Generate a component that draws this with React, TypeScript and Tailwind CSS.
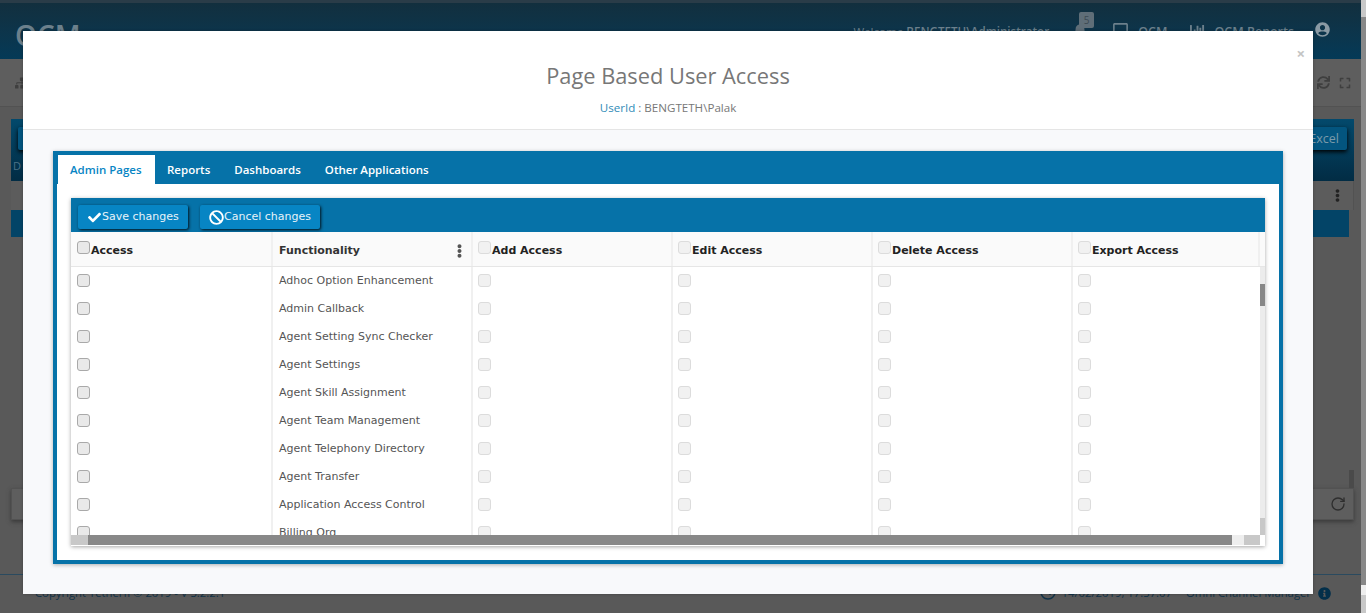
import React from 'react';
import { FaBan, FaBell, FaCheck, FaEllipsisV, FaInfoCircle, FaRegClock, FaRegSquare, FaSitemap, FaSync, FaUserCircle, FaExpand, FaChartBar } from 'react-icons/fa';
import { RotateCw } from 'lucide-react';

const pages = [
  'Adhoc Option Enhancement',
  'Admin Callback',
  'Agent Setting Sync Checker',
  'Agent Settings',
  'Agent Skill Assignment',
  'Agent Team Management',
  'Agent Telephony Directory',
  'Agent Transfer',
  'Application Access Control',
  'Billing Org',
];

const tabs = ['Reports', 'Dashboards', 'Other Applications'];

function Check({ off }: { off?: boolean }) {
  return (
    <input
      type="checkbox"
      disabled={off}
      className={
        off
          ? 'appearance-none block shrink-0 w-[13px] h-[13px] rounded-[3px] border border-[#dcdcdc] bg-[#f1f1f1]'
          : 'appearance-none block shrink-0 w-[13px] h-[13px] rounded-[3px] border border-[#a9a9a9] bg-[#e9e9e9]'
      }
    />
  );
}

function HeadCell({ label, off, width, pad }: { label: string; off?: boolean; width: string; pad: string }) {
  return (
    <div className={`${width} ${pad} h-full border-r-2 border-[#f0f0f0] pt-[9px] flex items-start`}>
      <Check off={off} />
      <span className="font-bold text-[11px] leading-[16px] text-[#222] pl-px pt-[2px]">{label}</span>
    </div>
  );
}

function Backdrop() {
  return (
    <div className="h-[613px] flex flex-col bg-[#595959] overflow-hidden font-['Open_Sans',sans-serif] pr-[5px]">
      <div className="h-[3px] bg-[#2a3c48] shrink-0 -mr-[5px]" />
      <div className="h-[56px] shrink-0 bg-gradient-to-b from-[#122f3e] to-[#043a57] flex items-start pl-[15px] pr-[31px] text-[#6c808c]">
        <span className="text-[28px] leading-none font-semibold mt-[18px]">OCM</span>
        <div className="ml-auto flex items-start text-[12.5px] pt-[20px]">
          <span className="text-[11.6px] mr-[24px] leading-[18px]">
            Welcome <span className="font-semibold">BENGTETH\Administrator</span>
          </span>
          <div className="relative">
            <FaBell className="w-[14px] h-[14px] text-[#5f6e78]" />
            <span className="absolute -top-[11px] left-[6px] w-[15px] h-[16px] rounded-[2px] bg-[#5f6e78] text-[#3c4a53] text-[10px] leading-[16px] text-center">5</span>
          </div>
          <FaRegSquare className="w-[17px] h-[17px] ml-[25px] -mt-[1px]" />
          <span className="ml-[9px] font-semibold">OCM</span>
          <FaChartBar className="w-[15px] h-[15px] ml-[23px]" />
          <span className="ml-[9px] font-semibold">OCM Reports</span>
          <FaUserCircle className="w-[15px] h-[15px] ml-[21px] -mt-px text-[#8a9aa4]" />
        </div>
      </div>
      <div className="h-[48px] shrink-0 bg-[#5e5e5e] border-b border-[#525252] flex items-center pl-[15px] pr-[10px] text-[#3f3f3f]">
        <FaSitemap className="w-[14px] h-[12px]" />
        <FaSync className="w-[13px] h-[13px] ml-auto" />
        <FaExpand className="w-[12px] h-[12px] ml-[9px]" />
      </div>
      <div className="flex-1 flex flex-col pl-[11px] pr-[7px] pt-[12px]">
        <div className="h-[62px] shrink-0 bg-gradient-to-b from-[#03496c] to-[#022c44] relative">
          <div className="absolute left-[7px] top-[8px] w-[12px] h-[23px] bg-[#03557f] rounded-[2px] shadow-[0_2px_4px_#000]" />
          <div className="absolute right-[7px] top-[8px] w-[50px] h-[23px] bg-[#03557f] rounded-[2px] shadow-[0_2px_4px_#000] text-[#7a9aaa] text-[12.5px] leading-[23px] text-right pr-[8px]">Excel</div>
          <span className="absolute left-[2px] top-[39px] text-[#4a7187] text-[11px]">D</span>
        </div>
        <div className="h-[29px] shrink-0 bg-[#5c5c5c] border-r border-[#525252] flex items-center justify-end pr-[10px] text-[#222]">
          <FaEllipsisV className="w-[11px] h-[13px]" />
        </div>
        <div className="flex-1 flex pr-[5px] relative">
          <div className="flex-1">
            <div className="h-[27px] bg-[#034467]" />
          </div>
          <div className="absolute right-0 top-[260px] w-[5px] h-[18px] bg-[#4a4a4a]" />
        </div>
        <div className="h-[32px] shrink-0 bg-[#5e5e5e] border border-[#525252] shadow-[0_2px_4px_#3a3a3a] flex items-center justify-end pr-[7px] text-[#2e2e2e]">
          <RotateCw className="w-[16px] h-[16px]" strokeWidth={2} />
        </div>
        <div className="h-[54px] shrink-0" />
      </div>
      <div className="h-[39px] shrink-0 border-t border-[#2a4a5f] flex items-start pl-[35px] pr-[30px] pt-[9px] text-[#123348] text-[11.3px] leading-[18px]">
        <span>Copyright Tetherfi © 2019 - V 3.2.2.1</span>
        <FaRegClock className="w-[16px] h-[16px] ml-auto" />
        <span className="ml-[5px]">14/02/2019, 17:37:07</span>
        <span className="ml-[14px]">Omni Channel Manager</span>
        <FaInfoCircle className="w-[13px] h-[13px] ml-[7px] mt-[3px] text-[#032f4a]" />
      </div>
    </div>
  );
}

function PageAccessTable() {
  return (
    <div className="h-[348px] bg-white shadow-[0_1px_4px_rgba(0,0,0,0.35)] flex flex-col font-['DejaVu_Sans',sans-serif]">
      {/* Toolbar */}
      <div className="h-[34px] shrink-0 bg-[#0672a8] flex items-start gap-[12px] pl-[7px] pt-[7px]">
        <button className="h-[24px] w-[110px] bg-[#0785c4] rounded-[2px] shadow-[1px_1px_3px_rgba(0,0,0,0.85)] text-[#e8f3f9] text-[11px] flex items-center pl-[9px]">
          <FaCheck className="w-[15px] h-[13px] text-white" />
          <span>Save changes</span>
        </button>
        <button className="h-[24px] w-[120px] bg-[#0785c4] rounded-[2px] shadow-[1px_1px_3px_rgba(0,0,0,0.85)] text-[#e8f3f9] text-[11px] flex items-center pl-[9px]">
          <FaBan className="w-[15px] h-[15px] text-white" />
          <span>Cancel changes</span>
        </button>
      </div>
      {/* Header */}
      <div className="h-[35px] shrink-0 bg-[#fafafa] border-b border-[#e6e6e6] flex pr-[5px]">
        <HeadCell label="Access" width="w-[202px]" pad="pl-[6px]" />
        <div className="w-[200px] h-full border-r-2 border-[#f0f0f0] pl-[6px] pr-[6px] flex items-center justify-between">
          <span className="font-bold text-[11px] text-[#333] pt-[5px]">Functionality</span>
          <FaEllipsisV className="w-[11px] h-[14px] text-[#555] mt-[3px]" />
        </div>
        <HeadCell label="Add Access" off width="w-[200px]" pad="pl-[5px]" />
        <HeadCell label="Edit Access" off width="w-[200px]" pad="pl-[5px]" />
        <HeadCell label="Delete Access" off width="w-[200px]" pad="pl-[5px]" />
        <HeadCell label="Export Access" off width="flex-1" pad="pl-[5px]" />
      </div>
      {/* Rows */}
      <div className="flex-1 flex min-h-0">
        <div className="flex-1 overflow-hidden">
          {pages.map((name) => (
            <div key={name} className="h-[28px] flex">
              <div className="w-[202px] border-r-2 border-[#f0f0f0] pl-[6px] pt-[7px]">
                <Check />
              </div>
              <div className="w-[200px] border-r-2 border-[#f0f0f0] pl-[6px] text-[11px] leading-[28px] text-[#555] whitespace-nowrap">{name}</div>
              {[0, 1, 2].map((c) => (
                <div key={c} className="w-[200px] border-r-2 border-[#f0f0f0] pl-[5px] pt-[7px]">
                  <Check off />
                </div>
              ))}
              <div className="flex-1 pl-[5px] pt-[7px]">
                <Check off />
              </div>
            </div>
          ))}
        </div>
        <div className="w-[5px] shrink-0 bg-[#ececec] flex flex-col">
          <div className="h-[17px]" />
          <div className="h-[22px] bg-[#888]" />
          <div className="flex-1" />
          <div className="h-[17px] bg-[#c8c8c8]" />
        </div>
      </div>
      {/* Horizontal scrollbar */}
      <div className="h-[10px] shrink-0 mb-px flex">
        <div className="w-[17px] bg-[#c8c8c8]" />
        <div className="flex-1 bg-[#888]" />
        <div className="w-[12px] bg-[#eeeeee]" />
        <div className="w-[16px] bg-[#c8c8c8]" />
        <div className="w-[5px] bg-white" />
      </div>
    </div>
  );
}

export default function App() {
  return (
    <div className="relative h-[613px] overflow-hidden">
      <Backdrop />

      {/* Page scrollbar */}
      <div className="absolute right-0 top-0 bottom-0 w-[5px] flex flex-col bg-[#888]">
        <div className="h-[17px] bg-[#c8c8c8]" />
        <div className="flex-1" />
        <div className="h-[10px] bg-[#eeeeee]" />
        <div className="h-[18px] bg-[#c8c8c8]" />
      </div>

      {/* Modal */}
      <div className="absolute left-[23px] top-[31px] w-[1290px] h-[563px] bg-[#f8f9fb] rounded-tr-[3px] shadow-[0_0_3px_rgba(0,0,0,0.3)] flex flex-col font-['Open_Sans',sans-serif]">
        <div className="relative h-[99px] shrink-0 bg-white border-b border-[#e5e5e5] text-center">
          <h4 className="text-[21.8px] leading-[30px] text-[#777] pt-[30px] h-[60px]">Page Based User Access</h4>
          <p className="text-[11.6px] leading-[16px] text-[#777] pt-[9px]">
            <span className="text-[#2f8bb8]">UserId</span> : BENGTETH\Palak
          </p>
          <span className="absolute right-[8px] top-[11px] text-[#c4c4c4] text-[15px] leading-[22px] font-bold">×</span>
        </div>

        <div className="pt-[21px] pl-[30px] pr-[30px]">
          <div className="h-[413px] border-[4px] border-[#0672a8] bg-white shadow-[0_1px_4px_rgba(0,0,0,0.3)] flex flex-col">
            <div className="h-[29px] shrink-0 bg-[#0672a8] flex items-stretch pl-px text-[11.5px] font-semibold">
              <div className="w-[97px] bg-white text-[#0785c4] pl-[12px] leading-[30px]">Admin Pages</div>
              {tabs.map((t) => (
                <div key={t} className="text-white leading-[30px] px-[12px]">{t}</div>
              ))}
            </div>
            <div className="pt-[14px] pl-[14px] pr-[14px]">
              <PageAccessTable />
            </div>
          </div>
        </div>
      </div>
    </div>
  );
}
